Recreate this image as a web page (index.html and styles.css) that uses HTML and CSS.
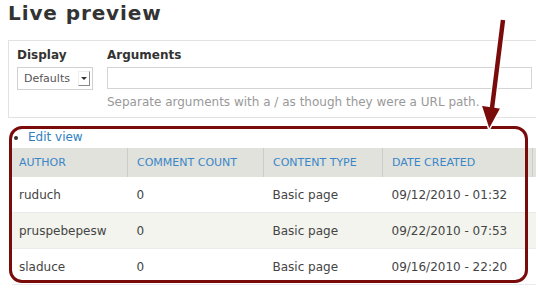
FILE: index.html
```html
<!DOCTYPE html>
<html>
<head>
<meta charset="utf-8">
<link rel="stylesheet" href="styles.css">
</head>
<body>
<h2 class="title">Live preview</h2>
<div class="controls">
  <div class="field field-display">
    <label class="label">Display</label>
    <div class="select"><span class="select-text">Defaults</span><span class="select-btn"><span class="tri"></span></span></div>
  </div>
  <div class="field field-args">
    <label class="label">Arguments</label>
    <div class="input"></div>
    <div class="desc">Separate arguments with a / as though they were a URL path.</div>
  </div>
</div>
<div class="result">
  <ul class="links"><li><a href="#">Edit view</a></li></ul>
  <table class="grid">
    <thead>
      <tr><th class="c1">Author</th><th class="c2">Comment count</th><th class="c3">Content type</th><th class="c4">Date created</th><th class="c5"></th></tr>
    </thead>
    <tbody>
      <tr><td>ruduch</td><td>0</td><td>Basic page</td><td>09/12/2010 - 01:32</td><td></td></tr>
      <tr class="even"><td>pruspebepesw</td><td>0</td><td>Basic page</td><td>09/22/2010 - 07:53</td><td></td></tr>
      <tr><td>sladuce</td><td>0</td><td>Basic page</td><td>09/16/2010 - 22:20</td><td></td></tr>
    </tbody>
  </table>
</div>
<div class="highlight"></div>
<svg class="arrow" width="536" height="285" viewBox="0 0 536 285">
  <line x1="503" y1="20" x2="492" y2="110" stroke="#fff" stroke-width="6.5"/>
  <polygon points="481,105 501,108 489,130" fill="#7a0b0b" stroke="#fff" stroke-width="1.5"/>
  <line x1="503" y1="20" x2="492" y2="108" stroke="#7a0b0b" stroke-width="4.5"/>
</svg>
</body>
</html>
```
FILE: styles.css
```css
html, body {
  margin: 0;
  padding: 0;
  background: #fff;
  overflow: hidden;
}
body {
  width: 536px;
  height: 285px;
  font-family: "DejaVu Sans", Verdana, sans-serif;
  color: #333;
  position: relative;
}
.title {
  margin: 0;
  padding: 2px 0 0 8px;
  height: 40px;
  box-sizing: border-box;
  font-size: 20px;
  letter-spacing: 0.9px;
  font-weight: bold;
  color: #333;
  line-height: 22px;
}
.controls {
  margin-left: 8px;
  border: 1px solid #e2e2e2;
  border-right: none;
  height: 78px;
  box-sizing: border-box;
  display: flex;
  gap: 14px;
  padding: 6px 0 0 8px;
}
.label {
  display: block;
  font-weight: bold;
  font-size: 12px;
  line-height: 16px;
  color: #333;
  margin-bottom: 4px;
}
.select {
  width: 76px;
  height: 23px;
  box-sizing: border-box;
  border: 1px solid #d0d0d0;
  display: flex;
  align-items: center;
  justify-content: space-between;
  padding: 0 2px 0 6px;
  font-size: 11px;
  color: #555;
}
.select-btn {
  width: 12px;
  height: 15px;
  box-sizing: border-box;
  border-right: 1px solid #888;
  border-bottom: 1px solid #888;
  border-top: 1px solid #eee;
  border-left: 1px solid #eee;
  display: flex;
  align-items: center;
  justify-content: center;
}
.tri {
  width: 0;
  height: 0;
  border-left: 3px solid transparent;
  border-right: 3px solid transparent;
  border-top: 3px solid #333;
}
.field-args {
  flex: 1;
}
.input {
  width: 425px;
  height: 22px;
  box-sizing: border-box;
  border: 1px solid #d4d4d4;
}
.desc {
  margin-top: 5px;
  font-size: 12px;
  color: #999;
  line-height: 16px;
}
.result {
  padding: 11px 0 0 12px;
}
.links {
  margin: 0;
  padding: 0 0 0 16px;
  font-size: 12px;
  line-height: 16px;
  color: #333;
}
.links a {
  color: #2f7fc1;
  text-decoration: none;
}
.grid {
  margin-top: 3px;
  border-collapse: collapse;
  table-layout: fixed;
  width: 540px;
  font-size: 12px;
}
.grid th {
  background: #e1e2dc;
  height: 29px;
  text-align: left;
  text-transform: uppercase;
  font-weight: normal;
  font-size: 11px;
  color: #3a86c8;
  padding: 0 0 0 9px;
  border-left: 1px solid #ccc;
}
.grid th.c1 { border-left: none; padding-left: 7px; width: 108px; }
.grid th.c2 { width: 126px; }
.grid th.c3 { width: 109px; }
.grid th.c4 { width: 140px; }
.grid td {
  height: 35px;
  padding: 0 0 0 9px;
  color: #444;
  border-bottom: 1px solid #eaeaea;
}
.grid td:first-child { padding-left: 7px; }
.grid tr.even td { background: #f3f4ee; }
.highlight {
  position: absolute;
  left: 9px;
  top: 126px;
  width: 519px;
  height: 157px;
  box-sizing: border-box;
  border: 3px solid #7a0b0b;
  border-radius: 13px;
}
.arrow {
  position: absolute;
  left: 0;
  top: 0;
}
```
